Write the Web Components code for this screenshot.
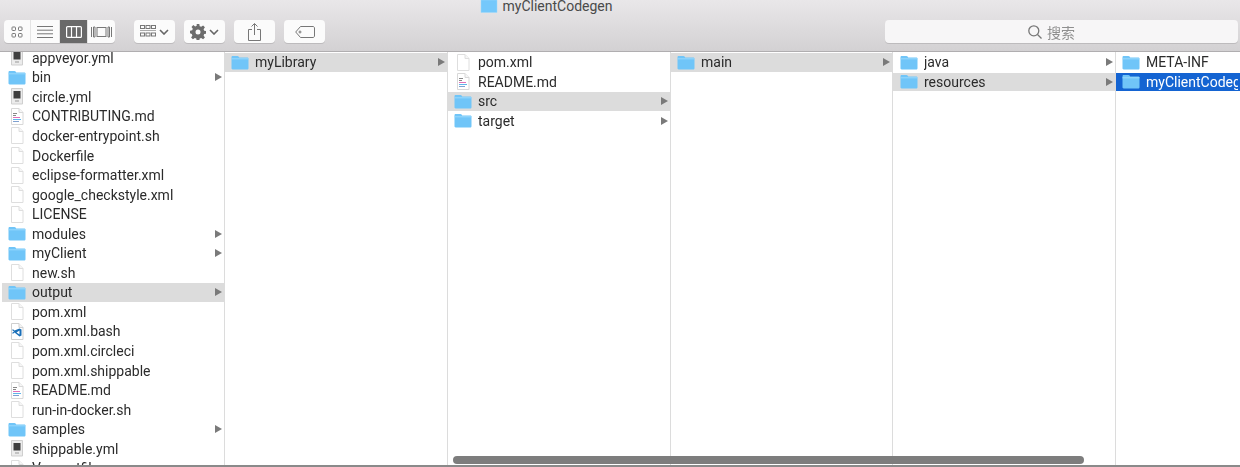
<!DOCTYPE html>
<html>
<head>
<meta charset="utf-8">
<title>myClientCodegen</title>
<style>
    html, body { margin: 0; padding: 0; height: 100%; overflow: hidden; background: #fff; }
    body { font-family: Roboto, "Liberation Sans", "Noto Sans CJK SC", sans-serif; }
</style>
</head>
<body>
<finder-window>
    <finder-toolbar slot="toolbar" title-text="myClientCodegen"></finder-toolbar>
    <finder-column width="225" first pad="6" offset="-3.5" items="yml:appveyor.yml,folder:bin,yml:circle.yml,readme:CONTRIBUTING.md,doc:docker-entrypoint.sh,doc:Dockerfile,doc:eclipse-formatter.xml,doc:google_checkstyle.xml,doc:LICENSE,folder:modules,folder:myClient,doc:new.sh,folder:output:sel,doc:pom.xml,vscode:pom.xml.bash,doc:pom.xml.circleci,doc:pom.xml.shippable,readme:README.md,doc:run-in-docker.sh,folder:samples,yml:shippable.yml,doc:Vagrantfile"></finder-column>
    <finder-column width="223" offset="1" items="folder:myLibrary:sel"></finder-column>
    <finder-column width="223" offset="1" items="doc:pom.xml,readme:README.md,folder:src:sel,folder:target"></finder-column>
    <finder-column width="222" offset="1" items="folder:main:sel"></finder-column>
    <finder-column width="223" pad="7" offset="1" items="folder:java,folder:resources:sel"></finder-column>
    <finder-column width="124" offset="1" last items="folder:META-INF,folder:myClientCodegen:active"></finder-column>
</finder-window>

<script>
const ICONS = {
    folder: `<svg width="18" height="15" viewBox="0 0 18 15"><path d="M.5 2.200C.5 1.400 1 1 1.700 1h4.700c.6 0 .9.2 1.200.6l.6.8h8c.7 0 1.300.5 1.300 1.200v9.600c0 .7-.6 1.300-1.300 1.300H1.700c-.7 0-1.200-.5-1.200-1.200z" fill="#70c5f8"/><path d="M.5 3.800h17" stroke="#9ad9fd" stroke-width="1"/></svg>`,
    doc: `<svg width="14" height="17" viewBox="0 0 14 17"><path d="M1.500.5h7.500l4 4v12h-11.500z" fill="#fff" stroke="#dedede"/><path d="M9 .5v4h4" fill="#f6f6f6" stroke="#dedede"/></svg>`,
    readme: `<svg width="14" height="17" viewBox="0 0 14 17"><path d="M1.500.5h7.500l4 4v12h-11.500z" fill="#fff" stroke="#d8d8d8"/><path d="M9 .5v4h4" fill="#f6f6f6" stroke="#d8d8d8"/><path d="M3 5.500h4M3 7.500h3" stroke="#888"/><path d="M3 9.500h7" stroke="#e070b8"/><path d="M3 11.500h8" stroke="#5fb4ea"/><path d="M3 13.500h6" stroke="#7fa0d0"/></svg>`,
    yml: `<svg width="14" height="17" viewBox="0 0 14 17"><path d="M1.500.5h11v15.500h-11z" fill="#ececec" stroke="#cfcfcf"/><path d="M3.500 3h7v7.500h-7z" fill="#3f3f3f"/><path d="M5 13h4" stroke="#999"/></svg>`,
    vscode: `<svg width="14" height="17" viewBox="0 0 14 17"><path d="M1.500.5h7.500l4 4v12h-11.500z" fill="#fff" stroke="#cfcfcf"/><path d="M9 .5v4h4" fill="#f4f4f4" stroke="#cfcfcf"/><path d="M9.500 5.500l2 1v6l-2 1-5-4-1.500 1.200-1-.7 2-1.500-2-1.500 1-.7 1.500 1.200zM9.500 7.500l-3 2 3 2z" fill="#1a6fb8"/></svg>`
};

class FinderWindow extends HTMLElement {
    constructor() {
        super();
        this.attachShadow({ mode: 'open' });
        this.shadowRoot.innerHTML = `
            <style>
                :host {
                    display: flex;
                    flex-direction: column;
                    height: 467px;
                    width: 1240px;
                    position: relative;
                    overflow: hidden;
                    box-sizing: border-box;
                    border-bottom: 2px solid #8a8a8a;
                    filter: blur(.35px);
                }
                .columns { display: flex; flex: 1; min-height: 0; }
                .scrollbar {
                    position: absolute;
                    left: 453px;
                    bottom: 1px;
                    width: 631px;
                    height: 8px;
                    border-radius: 4px;
                    background: #7d7d7d;
                }
            </style>
            <slot name="toolbar"></slot>
            <div class="columns"><slot></slot></div>
            <div class="scrollbar"></div>
        `;
    }
}
customElements.define('finder-window', FinderWindow);

class FinderToolbar extends HTMLElement {
    constructor() {
        super();
        this.attachShadow({ mode: 'open' });
    }

    connectedCallback() {
        const title = this.getAttribute('title-text');
        this.shadowRoot.innerHTML = `
            <style>
                :host {
                    display: block;
                    height: 52px;
                    box-sizing: border-box;
                    flex: none;
                    background: linear-gradient(#e9e7e9, #d3d1d3);
                    border-bottom: 1px solid #b0aeb0;
                    padding: 0 2px 0 4px;
                }
                .title {
                    height: 11px;
                    margin-bottom: 9px;
                    display: flex;
                    justify-content: center;
                    align-items: center;
                    gap: 5px;
                    font-size: 14px;
                    color: #4a4a4a;
                    padding-right: 150px;
                }
                .bar { display: flex; align-items: stretch; height: 23px; }
                .seg {
                    display: flex;
                    background: #fbfbfb;
                    border-radius: 4px;
                    box-shadow: 0 1px 0 #bdbbbd;
                    overflow: hidden;
                }
                .seg > span {
                    display: flex;
                    align-items: center;
                    justify-content: center;
                    border-right: 1px solid #e4e4e4;
                    box-sizing: border-box;
                }
                .seg > span:last-child { border-right: 0; }
                .seg > span.on { background: #696969; }
                .btn {
                    width: 41px;
                    margin-left: 9px;
                    display: flex;
                    align-items: center;
                    justify-content: center;
                    gap: 3px;
                    background: #fbfbfb;
                    border-radius: 4px;
                    box-shadow: 0 1px 0 #bdbbbd;
                }
                .first { margin-left: 19px; }
                .search {
                    margin-left: auto;
                    width: 353px;
                    box-sizing: border-box;
                    padding-right: 20px;
                    display: flex;
                    align-items: center;
                    justify-content: center;
                    gap: 5px;
                    background: #f7f6f7;
                    border-radius: 4px;
                    box-shadow: 0 1px 0 #bdbbbd;
                    color: #8f8f8f;
                    font-size: 14px;
                    font-family: "Noto Sans CJK SC", sans-serif;
                }
                svg { display: block; }
            </style>
            <div class="title">
                <svg width="18" height="14" viewBox="0 0 18 14"><path d="M1 1h16v12.500H1z" fill="#74c8fb" stroke="#9fd8fa" stroke-width=".5"/></svg>
                <span>${title}</span>
            </div>
            <div class="bar">
                <div class="seg">
                    <span style="width:27px"><svg width="12" height="12" viewBox="0 0 12 12" fill="none" stroke="#777"><rect x="1" y="1" width="3.500" height="3.500" rx=".7"/><rect x="7.500" y="1" width="3.500" height="3.500" rx=".7"/><rect x="1" y="7.500" width="3.500" height="3.500" rx=".7"/><rect x="7.500" y="7.500" width="3.500" height="3.500" rx=".7"/></svg></span>
                    <span style="width:29px"><svg width="16" height="12" viewBox="0 0 16 12" stroke="#777"><path d="M0 .5h16M0 4.200h16M0 7.800h16M0 11.500h16"/></svg></span>
                    <span class="on" style="width:28px"><svg width="16" height="12" viewBox="0 0 16 12" fill="none" stroke="#fff" stroke-width="1.200"><rect x=".6" y=".6" width="14.800" height="10.800" rx="1"/><path d="M5.500 .6v10.800M10.500 .6v10.800"/></svg></span>
                    <span style="width:27px"><svg width="21" height="12" viewBox="0 0 21 12" fill="none" stroke="#777"><rect x="6" y="1.500" width="9" height="9"/><path d="M.5 1v10M2.500 1v10h1.500V1zM20.500 1v10M18.500 1v10H17V1z"/></svg></span>
                </div>
                <div class="btn first">
                    <svg width="16" height="13" viewBox="0 0 16 13" fill="none" stroke="#777"><rect x=".5" y=".5" width="4" height="3"/><rect x="6" y=".5" width="4" height="3"/><rect x="11.500" y=".5" width="4" height="3"/><path d="M0 5.500h16" stroke="#aaa"/><rect x=".5" y="8" width="4" height="3"/><rect x="6" y="8" width="4" height="3"/><rect x="11.500" y="8" width="4" height="3"/></svg>
                    <svg width="10" height="6" viewBox="0 0 10 6" fill="none" stroke="#666" stroke-width="1.600"><path d="M1 1l4 4 4-4"/></svg>
                </div>
                <div class="btn">
                    <svg width="16" height="16" viewBox="0 0 16 16"><path fill="#6c6c6c" fill-rule="evenodd" d="M6.700 0h2.600l.4 2.200 1.500.6 1.900-1.300 1.800 1.800-1.300 1.900.6 1.500 2.200.4v2.600l-2.200.4-.6 1.500 1.300 1.900-1.800 1.800-1.900-1.300-1.500.6-.4 2.200H6.700l-.4-2.200-1.500-.6-1.900 1.300-1.800-1.800 1.300-1.900-.6-1.500L0 9.300V6.700l2.200-.4.6-1.500L1.500 2.900l1.800-1.800 1.900 1.300 1.500-.6zM8 5.500a2.500 2.500 0 100 5 2.500 2.500 0 000-5z"/></svg>
                    <svg width="10" height="6" viewBox="0 0 10 6" fill="none" stroke="#666" stroke-width="1.600"><path d="M1 1l4 4 4-4"/></svg>
                </div>
                <div class="btn">
                    <svg width="13" height="18" viewBox="0 0 13 18" fill="none" stroke="#777"><path d="M4 6.500H.5v11h12v-11H9M6.500 12V.8M3.500 3.500l3-3 3 3"/></svg>
                </div>
                <div class="btn">
                    <svg width="20" height="12" viewBox="0 0 20 12" fill="none" stroke="#777"><path d="M5.500.5H18c.8 0 1.500.7 1.500 1.500v8c0 .8-.7 1.500-1.500 1.500H5.500L.7 6z"/><circle cx="5" cy="6" r="1"/></svg>
                </div>
                <div class="search">
                    <svg width="14" height="14" viewBox="0 0 14 14" fill="none" stroke="#777" stroke-width="1.300"><circle cx="5.800" cy="5.800" r="5"/><path d="M9.500 9.500l4 4"/></svg>
                    <span>搜索</span>
                </div>
            </div>
        `;
    }
}
customElements.define('finder-toolbar', FinderToolbar);

class FinderColumn extends HTMLElement {
    constructor() {
        super();
        this.attachShadow({ mode: 'open' });
    }

    connectedCallback() {
        const offset = this.getAttribute('offset') || 0;
        const isLast = this.hasAttribute('last');
        const rows = this.getAttribute('items').split(',').map(item => {
            const [icon, name, state] = item.split(':');
            const arrow = icon === 'folder' && !isLast ? 'arrow' : '';
            return `<finder-row icon="${icon}" name="${name}" ${state || ''} ${arrow}></finder-row>`;
        });
        this.shadowRoot.innerHTML = `
            <style>
                :host {
                    display: block;
                    flex: none;
                    width: ${this.getAttribute('width')}px;
                    box-sizing: border-box;
                    overflow: hidden;
                    border-right: ${isLast ? '0' : '1px solid #dcdcdc'};
                    background: #fff;
                    padding-left: ${this.hasAttribute('first') ? 2 : 0}px;
                    --row-pad: ${this.getAttribute('pad') || 6}px;
                }
                .list { margin-top: ${offset}px; }
            </style>
            <div class="list">${rows.join('')}</div>
        `;
    }
}
customElements.define('finder-column', FinderColumn);

class FinderRow extends HTMLElement {
    constructor() {
        super();
        this.attachShadow({ mode: 'open' });
    }

    connectedCallback() {
        const icon = this.getAttribute('icon');
        this.shadowRoot.innerHTML = `
            <style>
                :host {
                    display: flex;
                    align-items: center;
                    height: 18.55px;
                    margin-bottom: 1px;
                    padding: 0 2px 0 var(--row-pad, 6px);
                    font-size: 14px;
                    color: #2b2b2b;
                    white-space: nowrap;
                }
                :host([sel]) { background: #dcdcdc; }
                :host([active]) { background: #1464d2; color: #fff; }
                .icon { width: 18px; margin-right: 6px; display: flex; justify-content: center; flex: none; }
                .name { flex: 1; overflow: hidden; }
                .arrow {
                    width: 0;
                    height: 0;
                    flex: none;
                    border-left: 7px solid #7a7a7a;
                    border-top: 4.500px solid transparent;
                    border-bottom: 4.500px solid transparent;
                }
                svg { display: block; }
            </style>
            <span class="icon">${ICONS[icon]}</span>
            <span class="name">${this.getAttribute('name')}</span>
            ${this.hasAttribute('arrow') ? '<span class="arrow"></span>' : ''}
        `;
    }
}
customElements.define('finder-row', FinderRow);
</script>
</body>
</html>
